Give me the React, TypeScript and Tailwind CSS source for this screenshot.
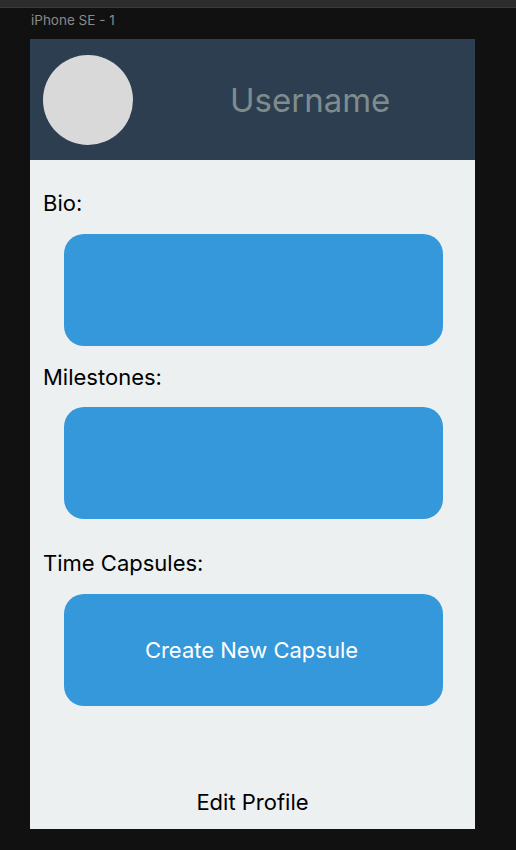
export default function App() {
  return (
    <div className="relative h-[850px] w-[516px] overflow-hidden bg-[#111111] font-['Inter',sans-serif]">
      {/* canvas toolbar strip */}
      <div className="h-2 border-b border-[#3a3a3a] bg-[#2c2c2c]" />

      {/* frame label */}
      <div className="ml-[31px] mt-[4px] text-[13.5px] leading-4 text-[#8a8a8a]">iPhone SE - 1</div>

      {/* frame */}
      <div className="ml-[30px] mt-[11px] flex h-[790px] w-[445px] flex-col bg-[#ecf0f1]">
        {/* header */}
        <div className="flex h-[121px] items-center bg-[#2c3e50] pl-[13px]">
          <div className="h-[90px] w-[90px] rounded-full bg-[#d9d9d9]" />
          <div className="ml-[97px] text-[33px] leading-10 text-[#7f8c8d]">Username</div>
        </div>

        {/* body */}
        <div className="flex flex-1 flex-col pt-[30px] text-[22px] leading-[27px] text-black">
          <div className="pl-[13px]">Bio:</div>
          <div className="ml-[34px] mt-[17px] h-[112px] w-[379px] rounded-[20px] bg-[#3498db]" />

          <div className="mt-[18px] pl-[13px]">Milestones:</div>
          <div className="ml-[34px] mt-[16px] h-[112px] w-[379px] rounded-[20px] bg-[#3498db]" />

          <div className="mt-[31px] pl-[13px]">Time Capsules:</div>
          <button className="ml-[34px] mt-[17px] flex h-[112px] w-[379px] items-center justify-center rounded-[20px] bg-[#3498db] pr-[4px] text-white">
            Create New Capsule
          </button>

          <div className="mt-auto pb-[13px] text-center">Edit Profile</div>
        </div>
      </div>
    </div>
  )
}
